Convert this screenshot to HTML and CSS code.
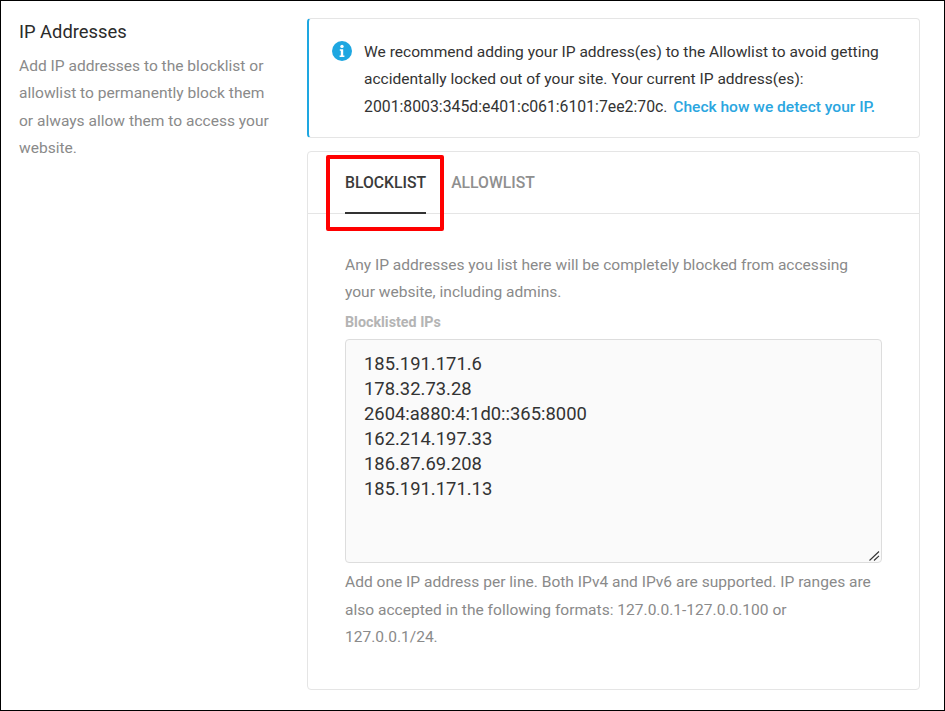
FILE: index.html
```html
<!DOCTYPE html>
<html lang="en">
<head>
    <meta charset="UTF-8">
    <meta name="viewport" content="width=device-width, initial-scale=1.0">
    <title>IP Addresses</title>
    <link rel="stylesheet" href="styles.css">
</head>
<body>
    <div class="page">
        <div class="intro">
            <h2>IP Addresses</h2>
            <p>Add IP addresses to the blocklist or allowlist to permanently block them or always allow them to access your website.</p>
        </div>

        <div class="main">
            <div class="notice">
                <svg class="notice-icon" viewBox="0 0 20 20" width="20" height="20">
                    <circle cx="10" cy="10" r="10" fill="#1ea7e1"/>
                    <circle cx="10" cy="5.4" r="1.7" fill="#fff"/>
                    <path d="M7.8 8.2h3.4v6.2h1.2v1.6H7.6v-1.6h1.2V9.8h-1z" fill="#fff"/>
                </svg>
                <p>We recommend adding your IP address(es) to the Allowlist to avoid getting accidentally locked out of your site. Your current IP address(es): <span class="ip">2001:8003:345d:e401:c061:6101:7ee2:70c</span>. <a href="#">Check how we detect your IP.</a></p>
            </div>

            <div class="panel">
                <div class="tabs">
                    <div class="tab tab-active">BLOCKLIST</div>
                    <div class="tab">ALLOWLIST</div>
                </div>
                <div class="panel-body">
                    <p class="help">Any IP addresses you list here will be completely blocked from accessing your website, including admins.</p>
                    <label for="blocklist">Blocklisted IPs</label>
                    <div class="textarea-wrap">
                        <textarea id="blocklist" spellcheck="false">185.191.171.6
178.32.73.28
2604:a880:4:1d0::365:8000
162.214.197.33
186.87.69.208
185.191.171.13</textarea>
                        <svg class="grip" viewBox="0 0 11 10" width="11" height="10">
                            <path d="M0.5 9.5L10 0.5M5 9.5L10 4.8" stroke="#333" stroke-width="1.1" fill="none"/>
                        </svg>
                    </div>
                    <p class="help">Add one IP address per line. Both IPv4 and IPv6 are supported. IP ranges are also accepted in the following formats: 127.0.0.1-127.0.0.100 or 127.0.0.1/24.</p>
                </div>
                <div class="tab-marker"></div>
            </div>
        </div>
    </div>
</body>
</html>
```

FILE: styles.css
```css
* {
  box-sizing: border-box;
}

body {
  margin: 0;
  background-color: #fff;
  font-family: Roboto, "Liberation Sans", sans-serif;
  font-size: 15.55px;
  line-height: 27.5px;
  color: #8a8a8a;
}

.page {
  display: flex;
  gap: 18px;
  width: 945px;
  height: 711px;
  padding: 17px 24px 20px 18px;
  border: 1px solid #000;
}

.intro {
  width: 270px;
  flex-shrink: 0;
}

.intro h2 {
  margin: 0 0 7.5px;
  font-size: 18.35px;
  font-weight: 400;
  line-height: 27px;
  color: #2b2b2b;
}

.intro p {
  margin: 0;
  max-width: 255px;
}

.main {
  flex: 1;
  min-width: 0;
}

.notice {
  display: flex;
  gap: 12px;
  height: 120px;
  padding: 19.6px 20px 0 23px;
  margin-bottom: 13px;
  border: 1px solid #e5e5e5;
  border-left: 2px solid #1ea7e1;
  border-radius: 4px;
  color: #333;
}

.notice-icon {
  flex-shrink: 0;
  margin-top: 2.4px;
}

.notice p {
  margin: 0;
  line-height: 27.3px;
}

.notice .ip {
  font-size: 15.8px;
}

.notice a {
  color: #2ba6e0;
  font-weight: 500;
  text-decoration: none;
  margin-left: 2px;
}

.panel {
  position: relative;
  height: 539px;
  border: 1px solid #e5e5e5;
  border-radius: 4px;
}

.tabs {
  display: flex;
  gap: 25px;
  height: 62px;
  padding: 0 37px;
  border-bottom: 1px solid #e5e5e5;
  font-size: 15.75px;
}

.tab {
  height: 62px;
  padding-top: 17px;
  font-weight: 500;
  color: #8f8f8f;
}

.tab-active {
  color: #3a3a3a;
  border-bottom: 2px solid #333;
}

.tab-marker {
  position: absolute;
  left: 18px;
  top: 3px;
  width: 118px;
  height: 76px;
  border: 4px solid #f00;
  border-radius: 2px;
}

.panel-body {
  padding: 37.5px 37px 0;
}

.help {
  margin: 0;
  max-width: 530px;
}

label {
  display: block;
  margin-top: 2.5px;
  font-size: 14.3px;
  font-weight: 700;
  line-height: 27px;
  color: #b4b4b4;
}

.textarea-wrap {
  position: relative;
  width: 537px;
  height: 224px;
  margin: 3px 0 6px;
}

textarea {
  display: block;
  width: 100%;
  height: 100%;
  padding: 11px 18px;
  background-color: #fafafa;
  border: 1px solid #ddd;
  border-radius: 4px;
  outline: none;
  resize: none;
  font-family: Roboto, "Liberation Sans", sans-serif;
  font-size: 18.4px;
  line-height: 25px;
  color: #333;
}

.grip {
  position: absolute;
  right: 2px;
  bottom: 2px;
}
```
